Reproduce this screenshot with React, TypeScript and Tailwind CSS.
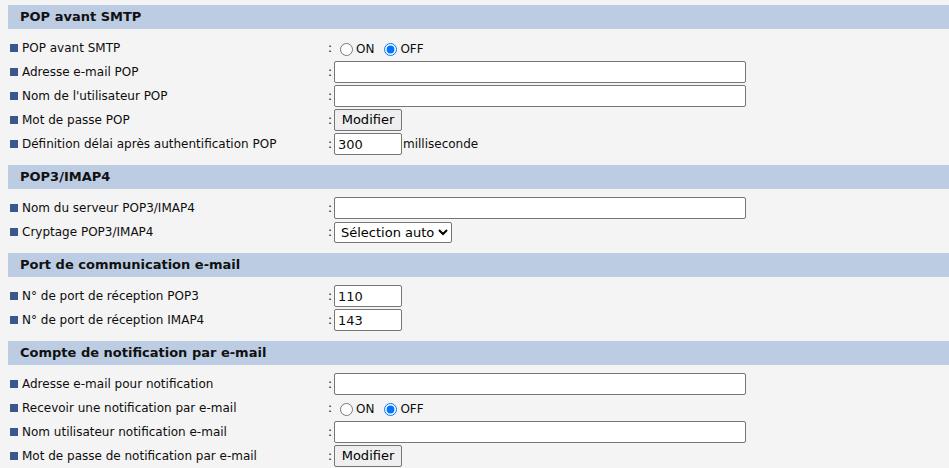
import { useState } from "react";

type Field =
  | { kind: "radio"; name: string; value: "on" | "off" }
  | { kind: "text"; value?: string }
  | { kind: "button" }
  | { kind: "short"; value: string; suffix?: string }
  | { kind: "select"; options: string[] };

interface Row {
  label: string;
  field: Field;
}

interface Section {
  title: string;
  rows: Row[];
}

const sections: Section[] = [
  {
    title: "POP avant SMTP",
    rows: [
      { label: "POP avant SMTP", field: { kind: "radio", name: "popBeforeSmtp", value: "off" } },
      { label: "Adresse e-mail POP", field: { kind: "text" } },
      { label: "Nom de l'utilisateur POP", field: { kind: "text" } },
      { label: "Mot de passe POP", field: { kind: "button" } },
      {
        label: "Définition délai après authentification POP",
        field: { kind: "short", value: "300", suffix: "milliseconde" },
      },
    ],
  },
  {
    title: "POP3/IMAP4",
    rows: [
      { label: "Nom du serveur POP3/IMAP4", field: { kind: "text" } },
      { label: "Cryptage POP3/IMAP4", field: { kind: "select", options: ["Sélection auto", "SSL", "STARTTLS", "Aucun"] } },
    ],
  },
  {
    title: "Port de communication e-mail",
    rows: [
      { label: "N° de port de réception POP3", field: { kind: "short", value: "110" } },
      { label: "N° de port de réception IMAP4", field: { kind: "short", value: "143" } },
    ],
  },
  {
    title: "Compte de notification par e-mail",
    rows: [
      { label: "Adresse e-mail pour notification", field: { kind: "text" } },
      { label: "Recevoir une notification par e-mail", field: { kind: "radio", name: "notify", value: "off" } },
      { label: "Nom utilisateur notification e-mail", field: { kind: "text" } },
      { label: "Mot de passe de notification par e-mail", field: { kind: "button" } },
    ],
  },
];

function RadioPair({ name, initial }: { name: string; initial: "on" | "off" }) {
  const [value, setValue] = useState(initial);
  return (
    <div className="flex items-center pt-[2px]">
      <label className="flex items-center">
        <input
          type="radio"
          name={name}
          checked={value === "on"}
          onChange={() => setValue("on")}
          className="m-0 ml-[6px] h-[13px] w-[13px]"
        />
        <span className="ml-[3px]">ON</span>
      </label>
      <label className="flex items-center ml-[10px]">
        <input
          type="radio"
          name={name}
          checked={value === "off"}
          onChange={() => setValue("off")}
          className="m-0 h-[13px] w-[13px]"
        />
        <span className="ml-[3px]">OFF</span>
      </label>
    </div>
  );
}

function FieldControl({ field }: { field: Field }) {
  switch (field.kind) {
    case "radio":
      return <RadioPair name={field.name} initial={field.value} />;
    case "text":
      return (
        <input
          type="text"
          defaultValue={field.value}
          className="h-[22px] w-[412px] rounded-[2px] border border-[#767676] bg-white px-[2px] outline-none"
        />
      );
    case "button":
      return (
        <button className="h-[22px] w-[68px] rounded-[2px] border border-[#767676] bg-[#efefef] text-[13px] text-black">
          Modifier
        </button>
      );
    case "short":
      return (
        <div className="flex items-center">
          <input
            type="text"
            defaultValue={field.value}
            className="h-[22px] w-[68px] rounded-[2px] border border-[#767676] bg-white px-[3px] text-[13px] outline-none"
          />
          {field.suffix && <span className="ml-px">{field.suffix}</span>}
        </div>
      );
    case "select":
      return (
        <select className="h-[21px] rounded-[2px] border border-[#767676] bg-white pl-[2px] text-[13px] text-black">
          {field.options.map((o) => (
            <option key={o}>{o}</option>
          ))}
        </select>
      );
  }
}

export default function App() {
  return (
    <div
      className="min-h-[468px] bg-[#f4f4f4] pt-[5px] pl-2 text-[12px] text-[#0d0d0d]"
      style={{ fontFamily: "Verdana, 'DejaVu Sans', sans-serif" }}
    >
      {sections.map((section) => (
        <div key={section.title} className="mb-[9px]">
          <div className="flex h-6 items-center bg-[#bccde3] pl-3 text-[13px] font-bold text-[#111]">
            {section.title}
          </div>
          <div className="pt-[7px]">
            {section.rows.map((row) => (
              <div key={row.label} className="flex h-6 items-center">
                <div className="flex w-[320px] items-center pl-[2px]">
                  <span className="mr-1 inline-block h-2 w-2 bg-[#3c5789]" />
                  <span>{row.label}</span>
                </div>
                <span className="w-[6px]">:</span>
                <FieldControl field={row.field} />
              </div>
            ))}
          </div>
        </div>
      ))}
    </div>
  );
}
